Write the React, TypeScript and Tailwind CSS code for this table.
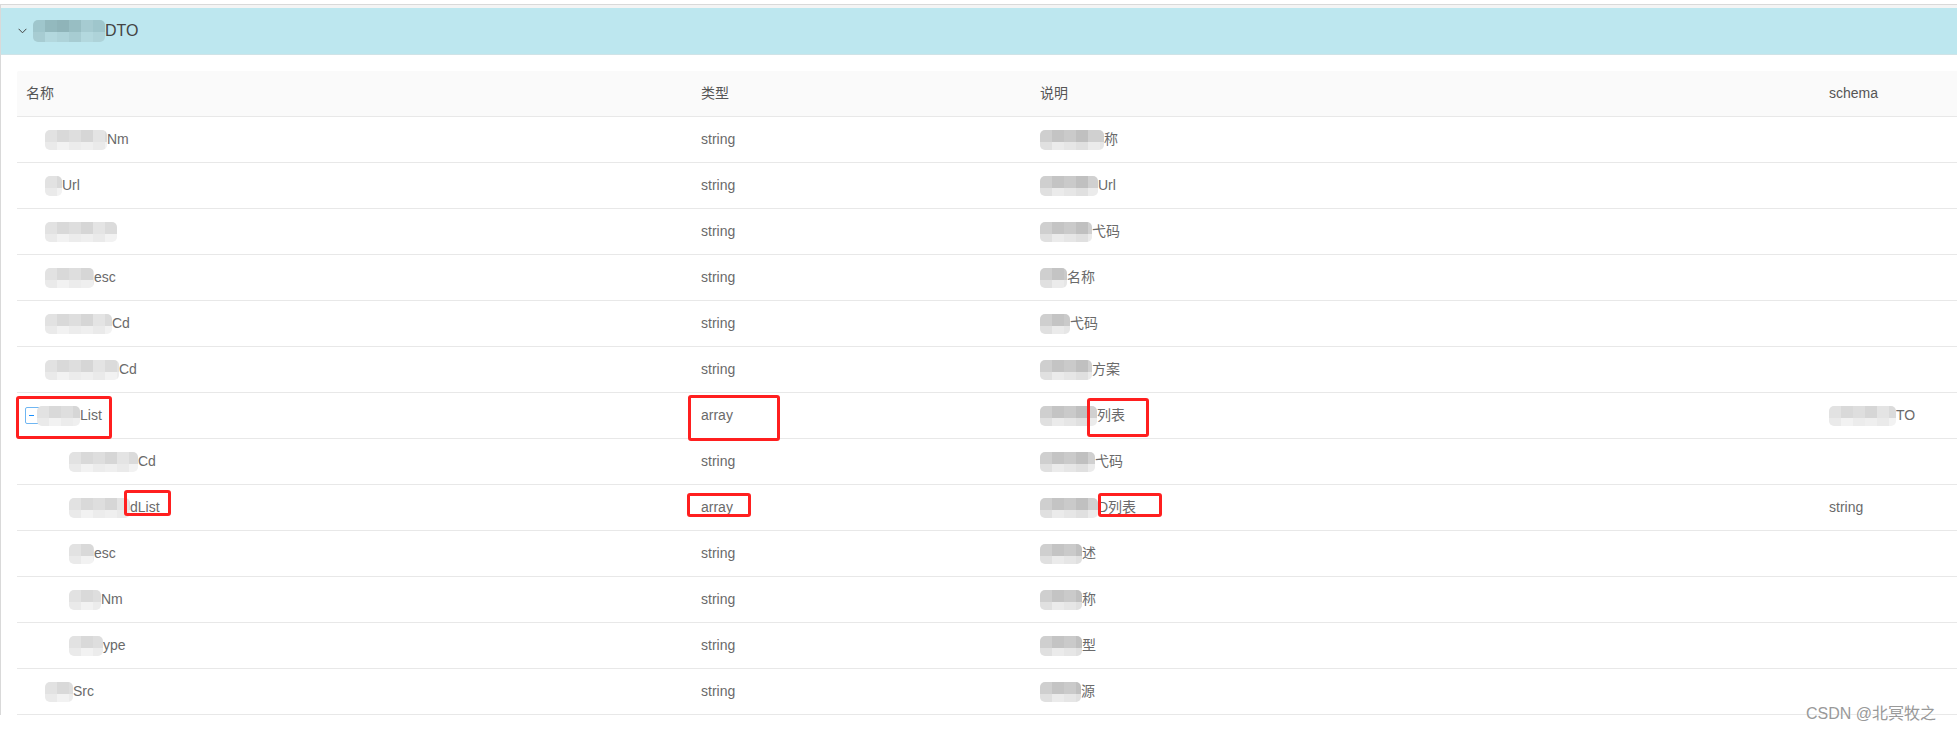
import React from 'react';

const lightTop = ['bg-[#e2e2e2]', 'bg-[#d9d9d9]', 'bg-[#dedede]', 'bg-[#d6d6d6]', 'bg-[#e4e4e4]', 'bg-[#dbdbdb]'];
const lightBot = ['bg-[#efefef]', 'bg-[#eaeaea]', 'bg-[#f2f2f2]', 'bg-[#ececec]'];
const darkTop = ['bg-[#cfcfcf]', 'bg-[#c4c4c4]', 'bg-[#cacaca]', 'bg-[#c0c0c0]', 'bg-[#d0d0d0]'];
const darkBot = ['bg-[#e6e6e6]', 'bg-[#e0e0e0]', 'bg-[#ebebeb]'];
const tealTop = ['bg-[#9fc6cc]', 'bg-[#93b9be]', 'bg-[#8fb4b9]', 'bg-[#98bec3]', 'bg-[#a6cbd1]'];
const tealBot = ['bg-[#aed3d9]', 'bg-[#a7ccd2]', 'bg-[#b3d8de]'];

type Variant = 'light' | 'dark' | 'teal';

function Mosaic({ w, v, className = '' }: { w: number; v: Variant; className?: string }) {
  const n = Math.ceil(w / 12);
  const top = v === 'light' ? lightTop : v === 'dark' ? darkTop : tealTop;
  const bot = v === 'light' ? lightBot : v === 'dark' ? darkBot : tealBot;
  const h = v === 'teal' ? 'h-[22px]' : 'h-[20px]';
  return (
    <div
      className={`flex flex-col shrink-0 overflow-hidden rounded-[5px] blur-[0.6px] ${h} ${className}`}
      style={{ width: w }}
    >
      <div className="flex h-[12px] shrink-0">
        {Array.from({ length: n }).map((_, i) => (
          <div key={i} className={`w-[12px] h-full shrink-0 ${top[i % top.length]}`} />
        ))}
      </div>
      <div className="flex flex-1">
        {Array.from({ length: n }).map((_, i) => (
          <div key={i} className={`w-[12px] h-full shrink-0 ${bot[(i + 1) % bot.length]}`} />
        ))}
      </div>
    </div>
  );
}

type Row = {
  lvl: 0 | 1 | 'exp';
  b1: number;
  t1: string;
  type: string;
  b3: number;
  t3: string;
  b4?: number;
  t4?: string;
};

const rows: Row[] = [
  { lvl: 0, b1: 62, t1: 'Nm', type: 'string', b3: 64, t3: '称' },
  { lvl: 0, b1: 17, t1: 'Url', type: 'string', b3: 58, t3: 'Url' },
  { lvl: 0, b1: 72, t1: '', type: 'string', b3: 52, t3: '弋码' },
  { lvl: 0, b1: 49, t1: 'esc', type: 'string', b3: 27, t3: '名称' },
  { lvl: 0, b1: 67, t1: 'Cd', type: 'string', b3: 30, t3: '弋码' },
  { lvl: 0, b1: 74, t1: 'Cd', type: 'string', b3: 52, t3: '方案' },
  { lvl: 'exp', b1: 43, t1: 'List', type: 'array', b3: 57, t3: '列表', b4: 67, t4: 'TO' },
  { lvl: 1, b1: 69, t1: 'Cd', type: 'string', b3: 55, t3: '弋码' },
  { lvl: 1, b1: 61, t1: 'dList', type: 'array', b3: 58, t3: 'D列表', t4: 'string' },
  { lvl: 1, b1: 25, t1: 'esc', type: 'string', b3: 42, t3: '述' },
  { lvl: 1, b1: 32, t1: 'Nm', type: 'string', b3: 42, t3: '称' },
  { lvl: 1, b1: 34, t1: 'ype', type: 'string', b3: 42, t3: '型' },
  { lvl: 0, b1: 28, t1: 'Src', type: 'string', b3: 41, t3: '源' },
];

function RedBox({ className }: { className: string }) {
  return <div className={`absolute border-[3px] border-[#ff1f1f] rounded-[3px] ${className}`} />;
}

export default function App() {
  return (
    <div
      className="relative w-[1957px] h-[730px] bg-white overflow-hidden text-[14px] text-[#6a6a6a]"
      style={{ fontFamily: '"Liberation Sans", Arial, "Noto Sans CJK SC", sans-serif' }}
    >
      <div className="mt-[4px] border-t border-l border-[#d9d9d9]">
        <div className="pt-[3px] bg-[#f4f4f4]">
          <div className="h-[47px] bg-[#bde7ef] border-b border-[#cfe3e7] flex items-center pl-[17px]">
            <svg width="9" height="6" viewBox="0 0 9 6" className="shrink-0">
              <polyline points="0.6,0.8 4.5,4.8 8.4,0.8" fill="none" stroke="#444" strokeWidth="1" />
            </svg>
            <Mosaic w={72} v="teal" className="ml-[6px]" />
            <span className="text-[16px] text-[#444] leading-none">DTO</span>
          </div>
        </div>
        <div className="pl-[16px] pt-[16px]">
          <div className="flex h-[46px] items-center bg-[#fafafa] border-b border-[#e8e8e8] rounded-tl-[2px] text-[#555]">
            <div className="w-[675px] pl-[9px] shrink-0">名称</div>
            <div className="w-[339px] pl-[9px] shrink-0">类型</div>
            <div className="w-[789px] pl-[9px] shrink-0">说明</div>
            <div className="flex-1 pl-[9px]">schema</div>
          </div>
          {rows.map((r, i) => (
            <div key={i} className="flex h-[46px] items-center border-b border-[#e8e8e8]">
              <div
                className={`w-[675px] shrink-0 flex items-center ${
                  r.lvl === 0 ? 'pl-[28px]' : r.lvl === 1 ? 'pl-[52px]' : 'pl-[8px]'
                }`}
              >
                {r.lvl === 'exp' && (
                  <div className="w-[17px] h-[17px] shrink-0 border border-[#6fb6f2] rounded-[2px] bg-white flex items-center justify-center">
                    <div className="w-[5px] h-[1px] bg-[#1890ff] -ml-[4px]" />
                  </div>
                )}
                <Mosaic w={r.b1} v="light" className={r.lvl === 'exp' ? '-ml-[5px]' : ''} />
                {r.t1 && <span className="whitespace-nowrap">{r.t1}</span>}
              </div>
              <div className="w-[339px] pl-[9px] shrink-0">{r.type}</div>
              <div className="w-[789px] pl-[9px] shrink-0 flex items-center">
                <Mosaic w={r.b3} v="dark" />
                <span className="whitespace-nowrap">{r.t3}</span>
              </div>
              <div className="flex-1 pl-[9px] flex items-center">
                {r.b4 && <Mosaic w={r.b4} v="light" />}
                {r.t4 && <span>{r.t4}</span>}
              </div>
            </div>
          ))}
        </div>
      </div>

      <RedBox className="left-[16px] top-[396px] w-[96px] h-[43px]" />
      <RedBox className="left-[688px] top-[395px] w-[92px] h-[46px]" />
      <RedBox className="left-[1087px] top-[398px] w-[62px] h-[39px]" />
      <RedBox className="left-[124px] top-[490px] w-[47px] h-[26px]" />
      <RedBox className="left-[687px] top-[493px] w-[64px] h-[24px]" />
      <RedBox className="left-[1098px] top-[493px] w-[64px] h-[24px]" />

      <div
        className="absolute left-[1806px] top-[703px] leading-[21px] text-[16px] text-[#999] whitespace-nowrap"
        style={{ textShadow: '0 0 1px #fff, 0 0 1px #fff' }}
      >
        CSDN @北冥牧之
      </div>
    </div>
  );
}
